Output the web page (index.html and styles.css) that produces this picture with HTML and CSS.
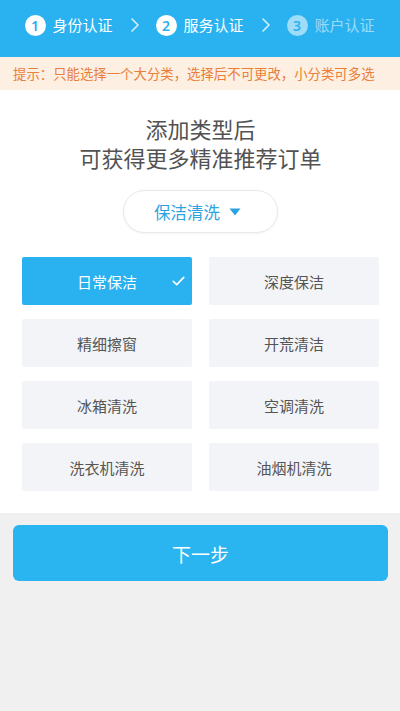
FILE: index.html
```html
<!DOCTYPE html>
<html lang="zh-CN">
<head>
<meta charset="utf-8">
<meta name="viewport" content="width=device-width, initial-scale=1">
<title>服务认证</title>
<link rel="stylesheet" href="styles.css">
</head>
<body>
<header class="steps">
  <div class="step">
    <span class="step-num">1</span>
    <span class="step-label">身份认证</span>
  </div>
  <svg class="chev" viewBox="0 0 8 14" width="8" height="14"><path d="M1 1 L7 7 L1 13" fill="none" stroke="#fff" stroke-width="1.6" stroke-linecap="round" stroke-linejoin="round"/></svg>
  <div class="step">
    <span class="step-num">2</span>
    <span class="step-label">服务认证</span>
  </div>
  <svg class="chev" viewBox="0 0 8 14" width="8" height="14"><path d="M1 1 L7 7 L1 13" fill="none" stroke="#fff" stroke-width="1.6" stroke-linecap="round" stroke-linejoin="round"/></svg>
  <div class="step step-off">
    <span class="step-num">3</span>
    <span class="step-label">账户认证</span>
  </div>
</header>

<div class="notice">提示：只能选择一个大分类，选择后不可更改，小分类可多选</div>

<main class="panel">
  <h1 class="title">添加类型后<br>可获得更多精准推荐订单</h1>
  <div class="picker-wrap">
    <button class="picker">保洁清洗<svg class="caret" viewBox="0 0 12 8" width="12" height="8"><path d="M0.5 0.5 H11.5 L6 7.5 Z" fill="#2aa3e0"/></svg></button>
  </div>
  <div class="grid">
    <div class="cell cell-on">日常保洁<svg class="check" viewBox="0 0 14 11" width="13" height="10"><path d="M1.2 5.8 L5 9.5 L12.8 1.5" fill="none" stroke="#fff" stroke-width="1.8" stroke-linecap="round" stroke-linejoin="round"/></svg></div>
    <div class="cell">深度保洁</div>
    <div class="cell">精细擦窗</div>
    <div class="cell">开荒清洁</div>
    <div class="cell">冰箱清洗</div>
    <div class="cell">空调清洗</div>
    <div class="cell">洗衣机清洗</div>
    <div class="cell">油烟机清洗</div>
  </div>
</main>

<footer class="actions">
  <button class="next">下一步</button>
</footer>
</body>
</html>
```

FILE: styles.css
```css
html, body {
  margin: 0;
  padding: 0;
  background: #f0f0f0;
}
body {
  font-family: "Noto Sans CJK SC", "Noto Sans", sans-serif;
  min-height: 711px;
}
.steps {
  height: 57px;
  background: #29b2ef;
  display: flex;
  justify-content: center;
  align-items: center;
  padding-bottom: 7px;
  box-sizing: border-box;
}
.step {
  display: flex;
  align-items: center;
  gap: 7px;
  color: #fff;
}
.step-num {
  width: 21px;
  height: 21px;
  border-radius: 50%;
  background: #fff;
  color: #29b2ef;
  font-size: 14px;
  line-height: 21px;
  text-align: center;
  font-family: "Noto Sans", sans-serif;
  font-weight: 600;
}
.step-label {
  font-size: 15px;
  line-height: 20px;
  width: 61px;
  white-space: nowrap;
}
.step-off .step-num {
  background: rgba(255,255,255,0.55);
}
.step-off .step-label {
  color: rgba(255,255,255,0.55);
}
.chev {
  margin: 0 17px;
  opacity: 0.8;
}
.notice {
  height: 33px;
  background: #fdefe2;
  color: #e8803a;
  font-size: 13.4px;
  line-height: 33px;
  padding-left: 13px;
  white-space: nowrap;
  overflow: hidden;
}
.panel {
  background: #fff;
  padding: 24px 21px 22px 22px;
}
.title {
  margin: 0;
  text-align: center;
  font-size: 22px;
  line-height: 29px;
  font-weight: 400;
  color: #525252;
}
.picker-wrap {
  display: flex;
  justify-content: center;
  margin-top: 18px;
}
.picker {
  width: 155px;
  height: 43px;
  border: 1px solid #e6e9ec;
  border-radius: 22px;
  background: #fff;
  box-shadow: 0 1px 3px rgba(0,0,0,0.05);
  color: #2aa3e0;
  font-family: inherit;
  font-size: 16.5px;
  display: flex;
  align-items: center;
  justify-content: center;
  gap: 9px;
  padding: 0 6px 0 0;
}
.grid {
  margin-top: 24px;
  display: grid;
  grid-template-columns: 170px 170px;
  column-gap: 17px;
  row-gap: 14px;
}
.cell {
  height: 48px;
  background: #f2f4f7;
  border-radius: 2px;
  color: #555;
  font-size: 15px;
  display: flex;
  align-items: center;
  justify-content: center;
  position: relative;
}
.cell-on {
  background: #2ab1ef;
  color: #fff;
}
.check {
  position: absolute;
  right: 7px;
  top: 19px;
}
.actions {
  padding: 12px 12px 0 13px;
}
.next {
  width: 100%;
  height: 56px;
  border: none;
  border-radius: 6px;
  background: #2ab4f0;
  color: #fff;
  font-family: inherit;
  font-size: 19px;
  display: block;
}
```
